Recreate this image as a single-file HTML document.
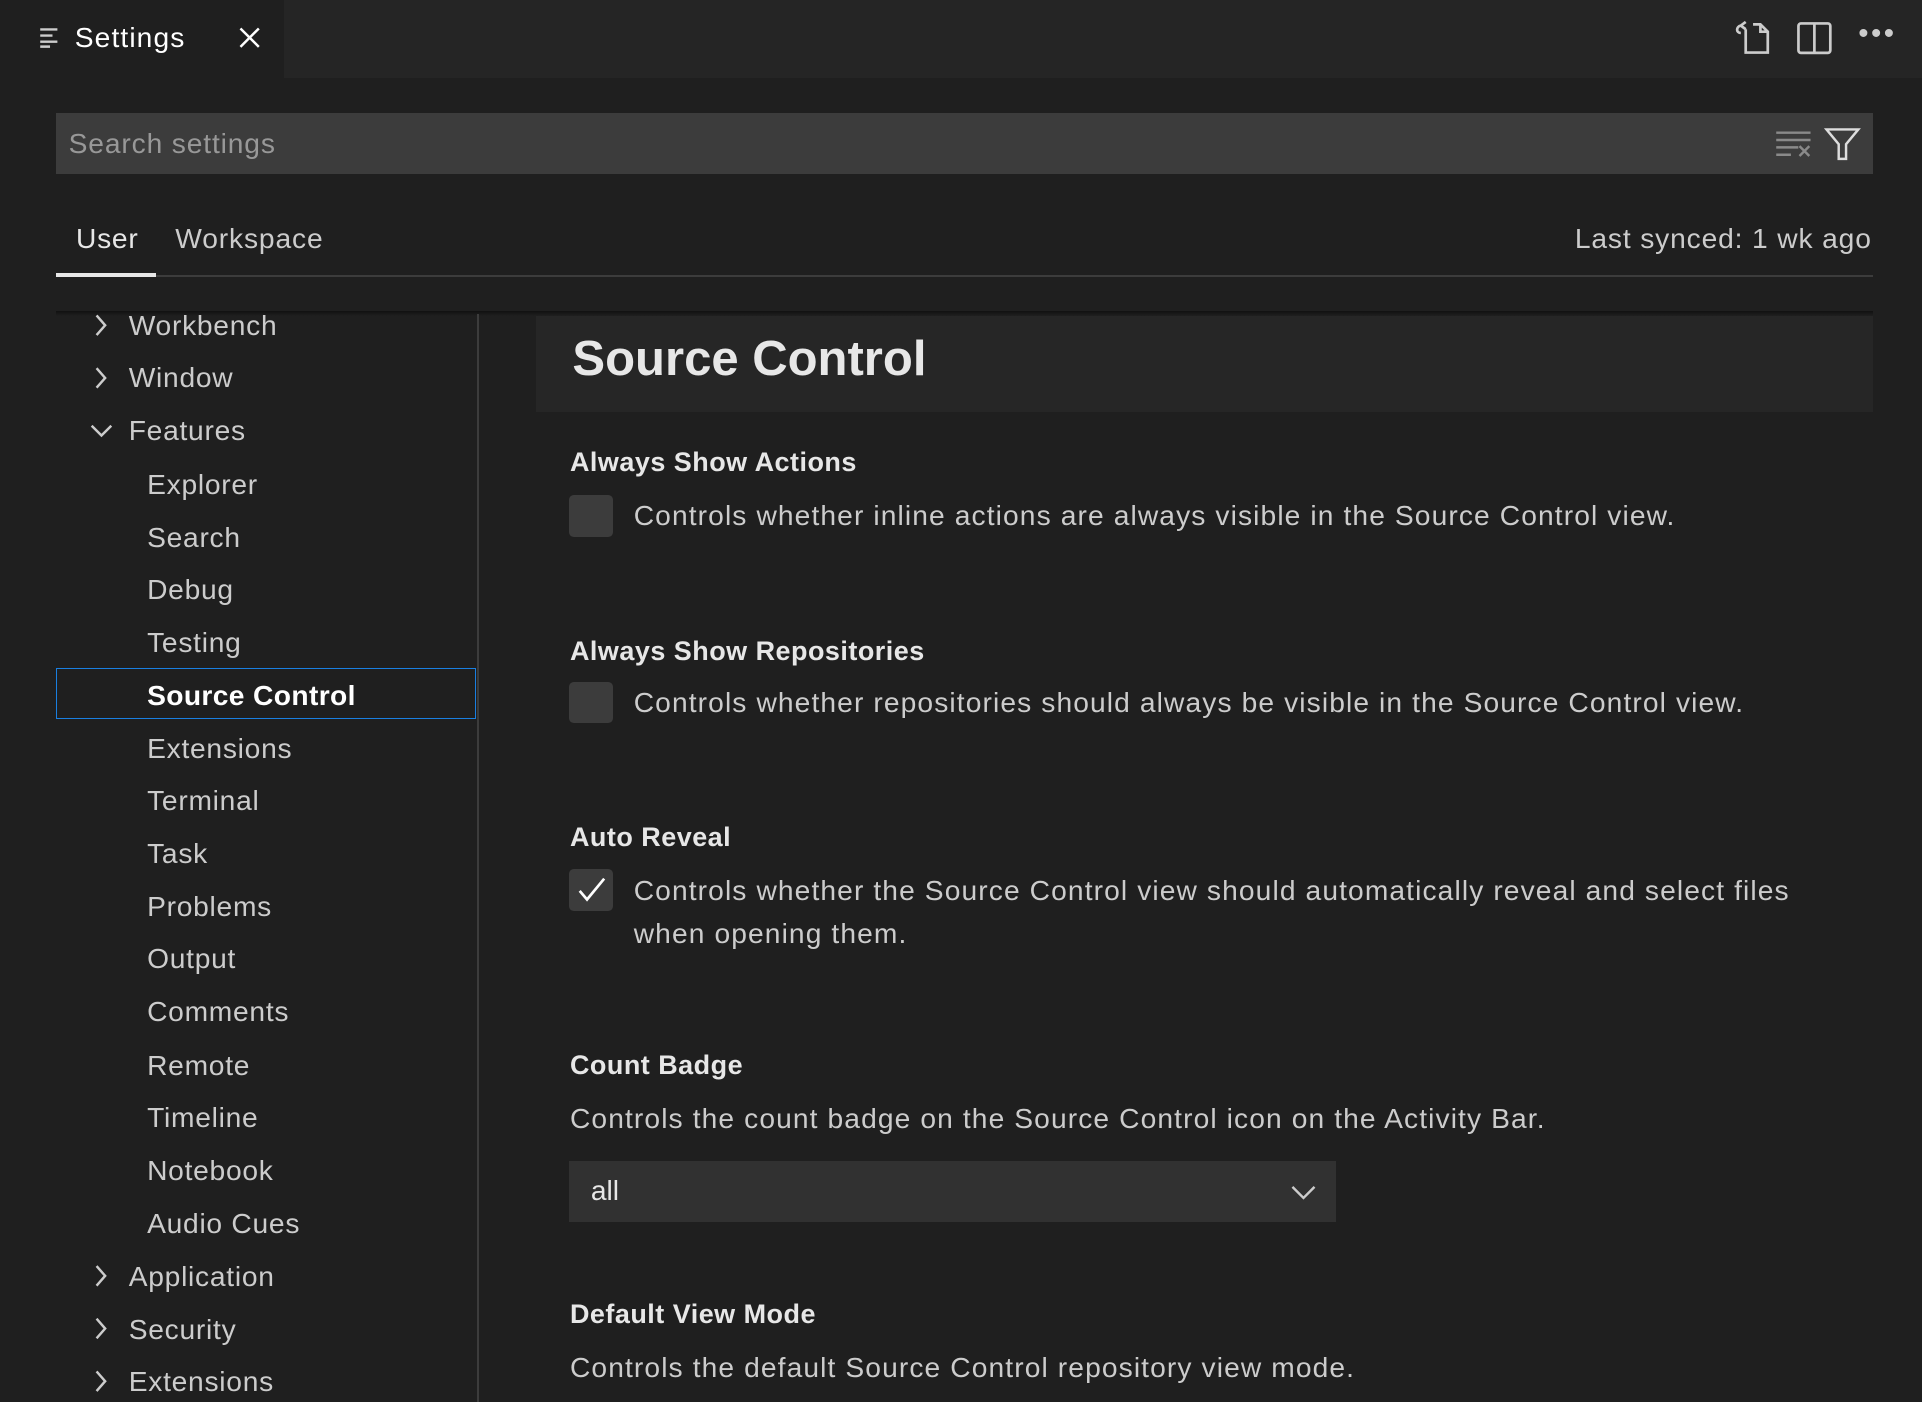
<!DOCTYPE html>
<html><head><meta charset="utf-8"><style>
html,body{margin:0;padding:0;background:#1f1f1f;overflow:hidden;width:1922px;height:1402px}
#w{zoom:1.22577;width:1568px;height:1144px;position:relative;font-family:"Liberation Sans",sans-serif;color:#cccccc}
.a{position:absolute;white-space:nowrap}
.t{font-size:23px;line-height:28px;letter-spacing:0.6px}
.d{font-size:23px;line-height:28px;letter-spacing:0.9px}
.h{font-size:22px;font-weight:bold;color:#e7e7e7;letter-spacing:0.4px}
.cb{position:absolute;left:464px;width:36px;height:34px;background:#3c3c3c;border-radius:4px}
</style></head><body><div id="w">
<div class="a" style="left:0;top:0;width:1568px;height:64px;background:#252525"></div>
<div class="a" style="left:0;top:0;width:232px;height:64px;background:#1f1f1f"></div>
<svg class="a" style="left:32px;top:22px" width="18" height="18" viewBox="0 0 18 18"><path d="M1 2h14M1 7h10M1 12h14M1 16h8" stroke="#ccc" stroke-width="2"/></svg>
<div class="a" style="left:61px;top:17px;font-size:23px;color:#fff;letter-spacing:0.9px">Settings</div>
<svg class="a" style="left:194px;top:21px" width="19" height="19" viewBox="0 0 19 19"><path d="M2 2l15 15M17 2L2 17" stroke="#fff" stroke-width="2"/></svg>
<svg class="a" style="left:1412px;top:14px" width="34" height="34" viewBox="0 0 34 34" fill="none" stroke="#ccc" stroke-width="2.2"><path d="M12 10v19h18V12l-6-6h-6M24 6v6h6M12 4l-4 3 4 3M8 7c-4 1-4 6 0 6"/></svg>
<svg class="a" style="left:1465px;top:17px" width="30" height="28" viewBox="0 0 30 28" fill="none" stroke="#ccc" stroke-width="2.2"><rect x="2" y="2" width="26" height="24" rx="2"/><path d="M15 2v24"/></svg>
<div class="a" style="left:1516px;top:14px;font-size:24px;color:#ccc;letter-spacing:2px">•••</div>
<div class="a" style="left:46px;top:92px;width:1482px;height:50px;background:#3c3c3c"></div>
<div class="a" style="left:56px;top:104px;font-size:23px;color:#989898;letter-spacing:0.7px">Search settings</div>
<svg class="a" style="left:1448px;top:105px" width="30" height="24" viewBox="0 0 30 24" stroke="#8a8a8a" stroke-width="2"><path d="M1 3h28M1 9h28M1 15h18M1 21h12M20 14l8 8M28 14l-8 8"/></svg>
<svg class="a" style="left:1488px;top:104px" width="30" height="28" viewBox="0 0 30 28" fill="none" stroke="#ddd" stroke-width="2"><path d="M2 2h26L18 14v12h-6V14z"/></svg>
<div class="a" style="left:62px;top:181px;font-size:23px;color:#e7e7e7;letter-spacing:0.6px">User</div>
<div class="a" style="left:143px;top:181px;font-size:23px;color:#cccccc;letter-spacing:0.7px">Workspace</div>
<div class="a" style="left:1200px;top:181px;width:327px;text-align:right;font-size:23px;color:#cccccc;letter-spacing:0.7px">Last synced: 1 wk ago</div>
<div class="a" style="left:46px;top:224px;width:1482px;height:2px;background:#3c3c3c"></div>
<div class="a" style="left:46px;top:223px;width:81px;height:3px;background:#e7e7e7"></div>
<div class="a" style="left:46px;top:254px;width:1482px;height:4px;background:linear-gradient(#111,#1f1f1f)"></div>
<div class="a" style="left:389px;top:256px;width:2px;height:890px;background:#3c3c3c"></div>
<div class="a" style="left:46px;top:545px;width:341px;height:40px;border:1.5px solid #1a7fe0"></div>
<svg class="a" style="left:72px;top:252px" width="20" height="910" viewBox="0 0 20 910" fill="none" stroke="#ccc" stroke-width="2"><path d="M7 5l7 8-7 8M7 48l7 8-7 8M3 95l8 8 8-8M7 781l7 8-7 8M7 824l7 8-7 8M7 867l7 8-7 8"/></svg>
<div class="a t" style="left:105px;top:251px">Workbench</div>
<div class="a t" style="left:105px;top:294px">Window</div>
<div class="a t" style="left:105px;top:337px">Features</div>
<div class="a t" style="left:120px;top:381px">Explorer</div>
<div class="a t" style="left:120px;top:424px">Search</div>
<div class="a t" style="left:120px;top:467px">Debug</div>
<div class="a t" style="left:120px;top:510px">Testing</div>
<div class="a t" style="left:120px;top:553px;font-weight:bold;color:#fff;letter-spacing:0.3px">Source Control</div>
<div class="a t" style="left:120px;top:596px">Extensions</div>
<div class="a t" style="left:120px;top:639px">Terminal</div>
<div class="a t" style="left:120px;top:682px">Task</div>
<div class="a t" style="left:120px;top:725px">Problems</div>
<div class="a t" style="left:120px;top:768px">Output</div>
<div class="a t" style="left:120px;top:811px">Comments</div>
<div class="a t" style="left:120px;top:855px">Remote</div>
<div class="a t" style="left:120px;top:897px">Timeline</div>
<div class="a t" style="left:120px;top:941px">Notebook</div>
<div class="a t" style="left:120px;top:984px">Audio Cues</div>
<div class="a t" style="left:105px;top:1027px">Application</div>
<div class="a t" style="left:105px;top:1070px">Security</div>
<div class="a t" style="left:105px;top:1113px">Extensions</div>
<div class="a" style="left:437px;top:258px;width:1091px;height:78px;background:#262626"></div>
<div class="a" style="left:467px;top:270px;font-size:40px;font-weight:bold;color:#e7e7e7">Source Control</div>
<div class="a h" style="left:465px;top:365px">Always Show Actions</div>
<div class="cb" style="top:404px"></div>
<div class="a d" style="left:517px;top:406px">Controls whether inline actions are always visible in the Source Control view.</div>
<div class="a h" style="left:465px;top:519px">Always Show Repositories</div>
<div class="cb" style="top:556px"></div>
<div class="a d" style="left:517px;top:559px">Controls whether repositories should always be visible in the Source Control view.</div>
<div class="a h" style="left:465px;top:671px">Auto Reveal</div>
<div class="cb" style="top:709px"></div>
<svg class="a" style="left:470px;top:714px" width="26" height="24" viewBox="0 0 26 24" fill="none" stroke="#fff" stroke-width="2.2"><path d="M3 13l6 7L23 3"/></svg>
<div class="a d" style="left:517px;top:712px">Controls whether the Source Control view should automatically reveal and select files</div>
<div class="a d" style="left:517px;top:747px">when opening them.</div>
<div class="a h" style="left:465px;top:857px">Count Badge</div>
<div class="a d" style="left:465px;top:898px">Controls the count badge on the Source Control icon on the Activity Bar.</div>
<div class="a" style="left:464px;top:947px;width:626px;height:50px;background:#313131"></div>
<div class="a" style="left:482px;top:958px;font-size:23px;color:#e7e7e7">all</div>
<svg class="a" style="left:1052px;top:964px" width="22" height="16" viewBox="0 0 22 16" fill="none" stroke="#ccc" stroke-width="2"><path d="M2 4l9 9 9-9"/></svg>
<div class="a h" style="left:465px;top:1060px">Default View Mode</div>
<div class="a d" style="left:465px;top:1101px">Controls the default Source Control repository view mode.</div>
</div></body></html>
